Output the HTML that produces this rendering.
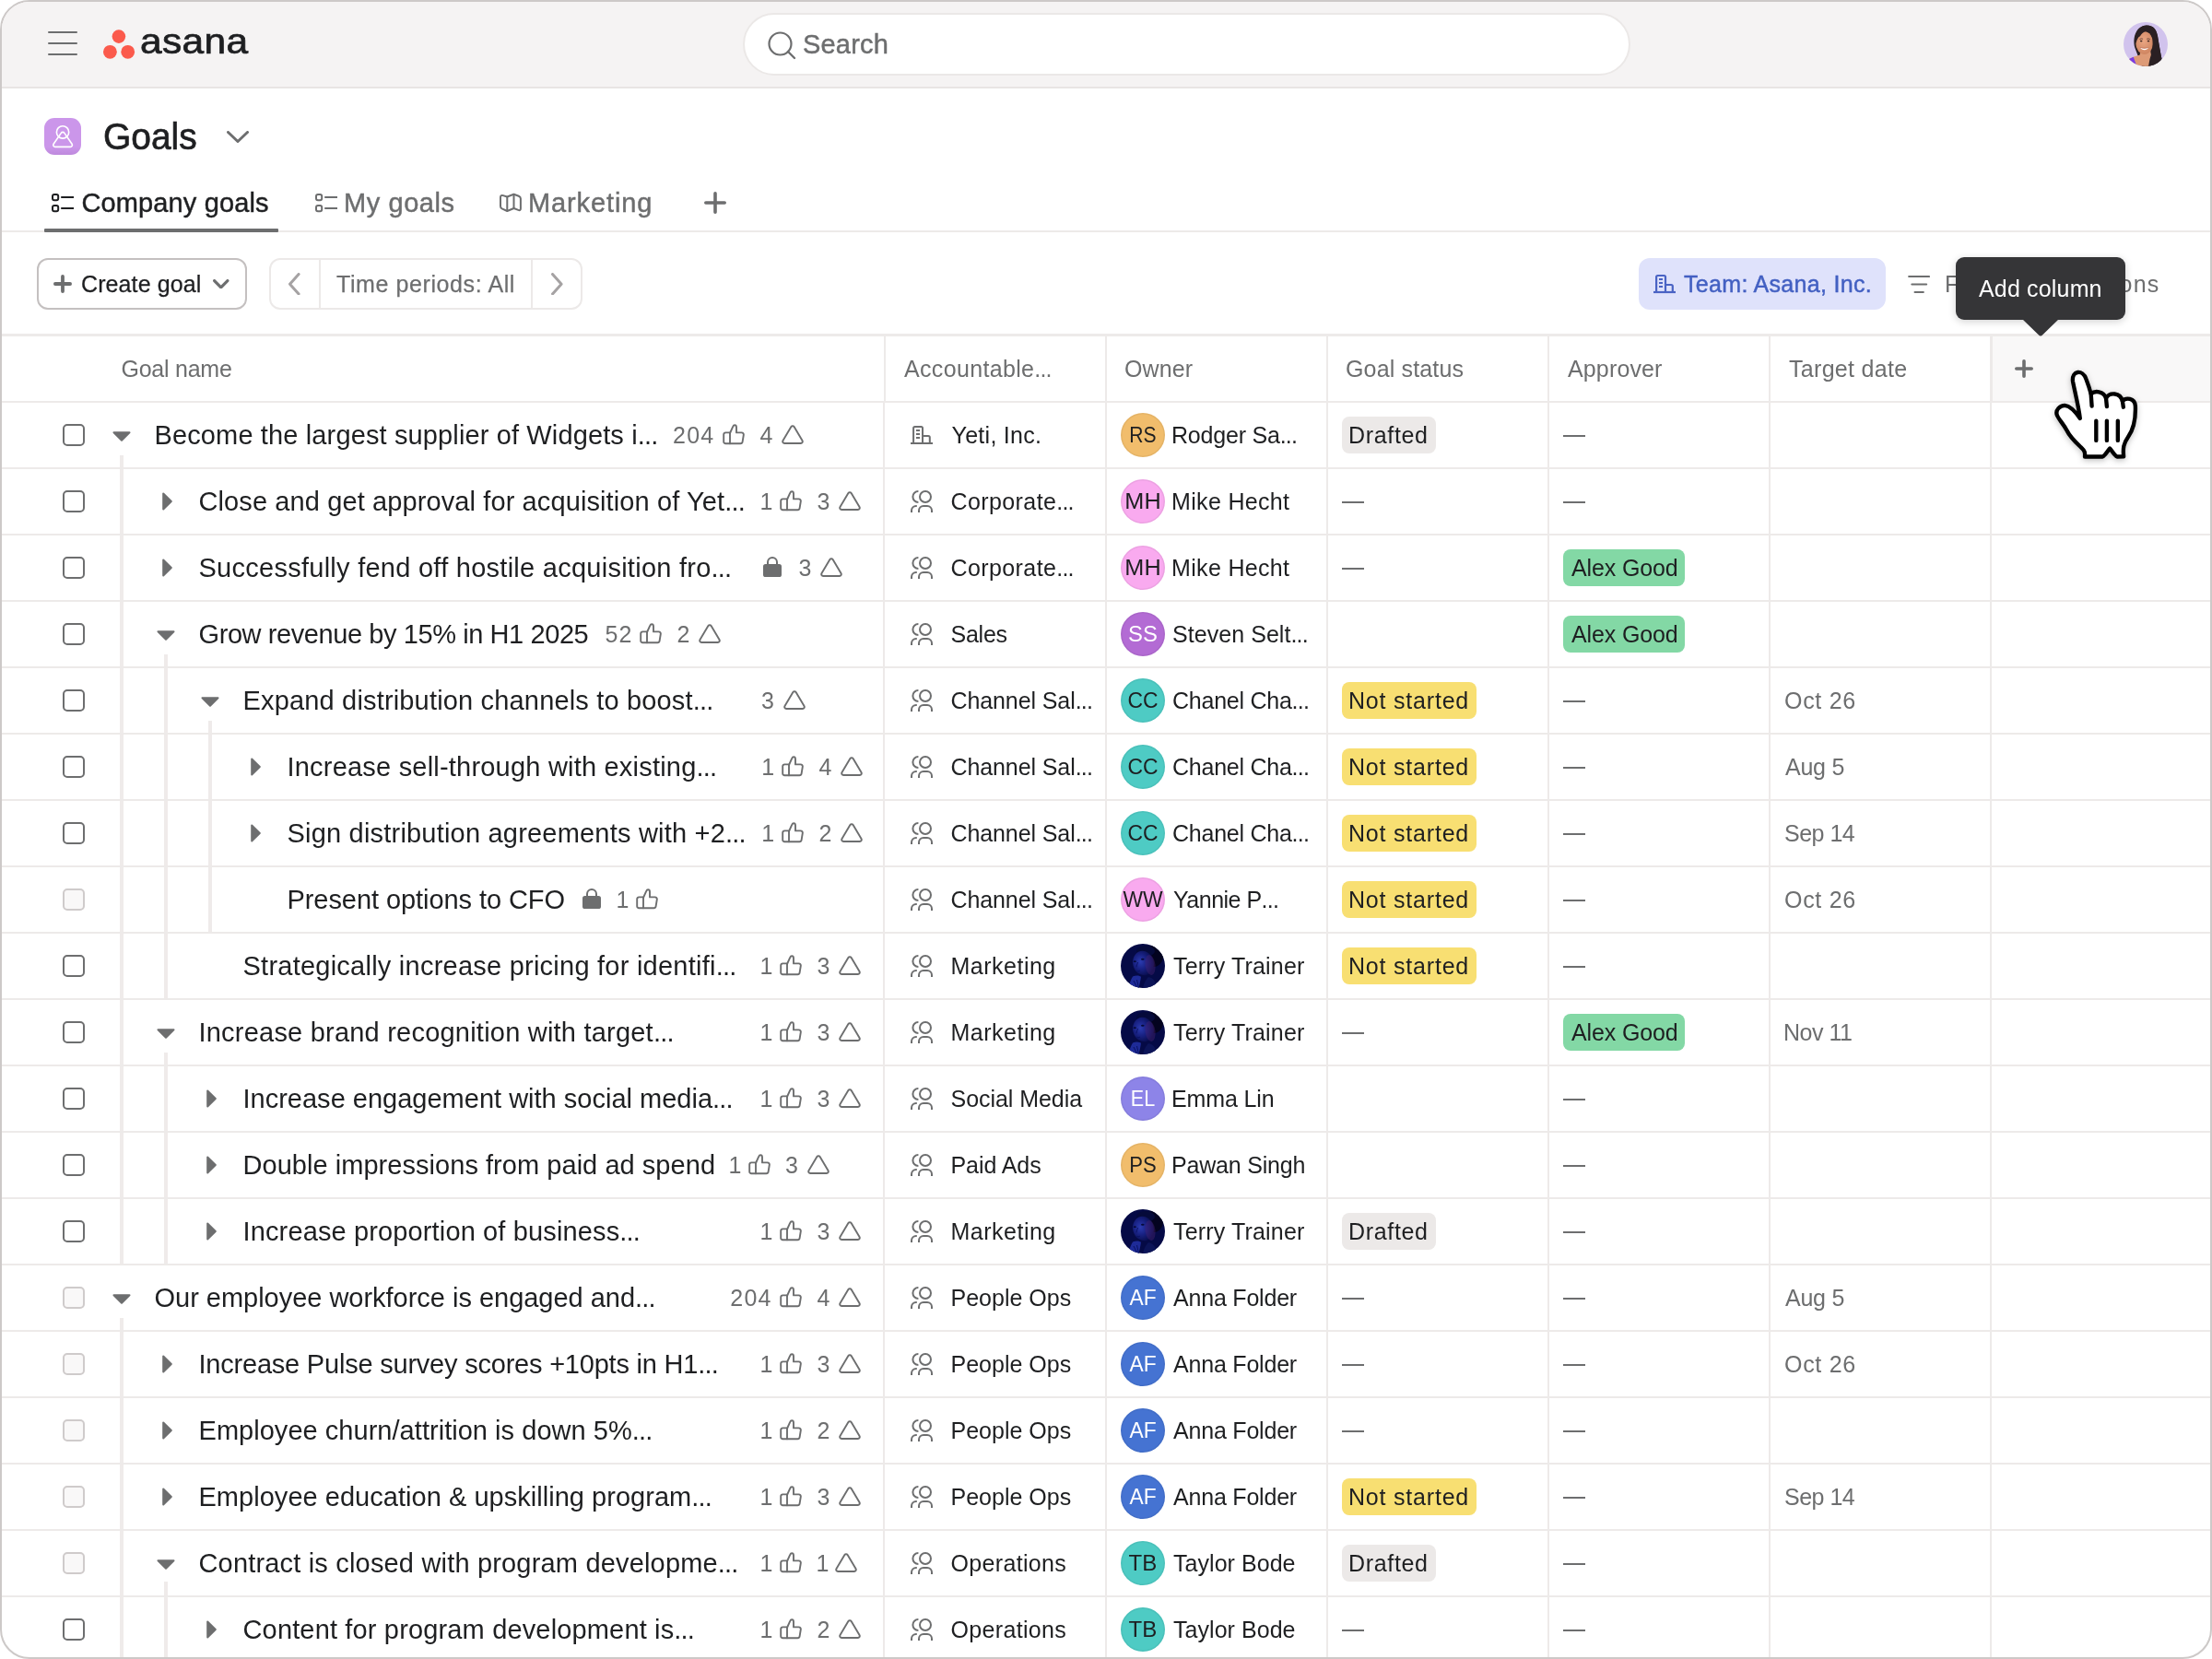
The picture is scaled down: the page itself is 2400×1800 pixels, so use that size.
<!DOCTYPE html>
<html lang="en"><head><meta charset="utf-8"><title>Goals - Asana</title><style>
html,body{margin:0;padding:0;background:#fff;}
body{width:2400px;height:1800px;overflow:hidden;position:relative;font-family:"Liberation Sans",sans-serif;}
#w{position:absolute;left:0;top:0;width:2400px;height:1800px;box-sizing:border-box;border:2px solid #cdc9c8;border-radius:32px;overflow:hidden;background:#fff;}
#c{position:absolute;left:-2px;top:-2px;width:2400px;height:1800px;will-change:transform;}
.a{position:absolute;display:block;}
.t{position:absolute;white-space:nowrap;line-height:48px;height:48px;}
.e{letter-spacing:-0.8px;}
</style></head>
<body><div id="w"><div id="c">
<div class="a" style="left:0px;top:0px;width:2400px;height:94px;background:#f5f3f3;border-bottom:2px solid #e8e5e4;"></div>
<div class="a" style="left:52px;top:33.8px;width:32px;height:2.4px;background:#6d6e6f;border-radius:1px;"></div>
<div class="a" style="left:52px;top:45.8px;width:32px;height:2.4px;background:#6d6e6f;border-radius:1px;"></div>
<div class="a" style="left:52px;top:57.8px;width:32px;height:2.4px;background:#6d6e6f;border-radius:1px;"></div>
<svg class="a" style="left:110px;top:30px;fill:#fb5a4c;" width="40" height="36" viewBox="0 0 40 36"><circle cx="18.9" cy="9.6" r="7.3"/><circle cx="9.4" cy="26.3" r="7.4"/><circle cx="28.7" cy="26.3" r="7.4"/></svg>
<span id="logo2" class="t" style="left:152.30px;top:20.8px;font-size:38px;color:#1e1f21;-webkit-text-stroke:0.7px #1e1f21;transform:scaleX(1.118);transform-origin:0 50%;letter-spacing:0.3px;">asana</span>
<div class="a" style="left:805.5px;top:14px;width:963px;height:67.5px;box-sizing:border-box;background:#fff;border:2px solid #ebe8e7;border-radius:34px;"></div>
<svg class="a" style="left:832.7px;top:33.6px;" width="32" height="32" viewBox="0 0 32 32"><circle cx="13.5" cy="13.5" r="12" fill="none" stroke="#6d6e6f" stroke-width="2.2"/><path d="M22 22l7 7" stroke="#6d6e6f" stroke-width="2.4" stroke-linecap="round"/></svg>
<span id="search" class="t" style="left:871.00px;top:24px;font-size:29px;color:#6d6e6f;letter-spacing:0.200px;-webkit-text-stroke:0.45px #6d6e6f;">Search</span>
<svg class="a" style="left:2304px;top:24px;" width="48" height="48" viewBox="0 0 48 48"><defs><clipPath id="avc"><circle cx="24" cy="24" r="24"/></clipPath><radialGradient id="skin" cx="45%" cy="40%" r="65%"><stop offset="0" stop-color="#eaa683"/><stop offset="1" stop-color="#cd835f"/></radialGradient></defs><g clip-path="url(#avc)"><rect width="48" height="48" fill="#d1c3ed"/><path d="M12.4 28C9 15 15 3.4 25 3.4c8 0 11 5.600000000000001 12 11.6c1.5 9 3 18 4.500000000000001 25L36 48H20z" fill="#2a2023"/><path d="M5 41c4-3.2 9-4.2 12.500000000000002-5.2L19 30h10l1 6c3 4 2 9-1 12H8z" fill="#dd9a76"/><path d="M5.5 40.2l5.2-2.4L14.5 48H6z" fill="#7a3ce6"/><ellipse cx="22.7" cy="22.6" rx="9.5" ry="12.3" fill="url(#skin)"/><path d="M13 24c-1.500000000000001-7 1-12.500000000000002 5-14.500000000000002c2.2-1 4.500000000000001-.8 6.500000000000001.2c-3.2 1.2-5.2 3-6.500000000000001 5.600000000000001c-2.2.8-3.600000000000001 4.5-5 8.7z" fill="#2a2023"/><path d="M24 9.4c4.300000000000001.6 7 4 7.5 10c.5 7-.5 13-3 20.6L27 48h10l4.500000000000001-8c-1.500000000000001-7-3-16-4.500000000000001-25C36 9 33 3.4 25 3.4c-2.500000000000001 0-4.500000000000001.8-6 2.2c2 .8 3.500000000000001 2 5 3.8z" fill="#2a2023"/><ellipse cx="19.2" cy="20.6" rx="1.3" ry=".8" fill="#3b2522"/><ellipse cx="27" cy="20.6" rx="1.3" ry=".8" fill="#3b2522"/><path d="M17.5 18.6q1.800000000000001-1.1 3.600000000000001-.3M25.2 18.3q1.800000000000001-.8 3.600000000000001.3" stroke="#3b2522" stroke-width=".7" fill="none"/><path d="M18.2 27.6c2.4 1.4 6.400000000000001 1.4 8.8 0c-1.200000000000001 3.6-7.4 3.6-8.8 0z" fill="#fff"/><path d="M18 27.4c2.6 1.1 6.6 1.1 9.200000000000001 0" stroke="#b5644d" stroke-width=".6" fill="none"/></g></svg>
<svg class="a" width="0" height="0" style="left:0;top:0"><defs><radialGradient id="tf" cx="38%" cy="42%" r="62%"><stop offset="0" stop-color="#2b3bb0"/><stop offset=".5" stop-color="#182182"/><stop offset="1" stop-color="#080d4c"/></radialGradient><clipPath id="tc"><circle cx="24" cy="24" r="24"/></clipPath><g id="terry" clip-path="url(#tc)"><rect width="48" height="48" fill="#050a46"/><ellipse cx="35" cy="13.5" rx="11" ry="11.5" fill="#03031f"/><ellipse cx="27" cy="8" rx="10" ry="6" fill="#050a3a"/><ellipse cx="24.5" cy="21" rx="11.3" ry="13.3" transform="rotate(-14 24.5 21)" fill="url(#tf)"/><ellipse cx="32" cy="23" rx="5.5" ry="11" transform="rotate(-8 32 23)" fill="#4a2372" opacity=".4"/><path d="M30 36c4 1 8 3 9 12H24c1-5 3-9 6-12z" fill="#0c1458"/><path d="M13 35.5c3-1.500000000000001 6.500000000000001-1.500000000000001 9 .2c-.5 4-1.500000000000001 8-2.500000000000001 12.3H8.5c1-5 2.500000000000001-9.5 4.500000000000001-12.500000000000002z" fill="#1e2b98"/><path d="M14 40l4 8M17.5 39l2 9" stroke="#0a1263" stroke-width="1"/><ellipse cx="15.3" cy="19.2" rx="1.6" ry=".9" fill="#060a38"/><ellipse cx="23.8" cy="16.8" rx="1.800000000000001" ry="1" fill="#060a38"/><path d="M18.6 20c-.8 2.500000000000001-1.800000000000001 4-1.2 5.2M16.5 29.3c1.500000000000001.6 3 .5 4.500000000000001-.1" stroke="#0a1263" stroke-width=".9" fill="none"/></g></defs></svg>
<div class="a" style="left:48px;top:128px;width:40px;height:40px;background:linear-gradient(#cb96ea 0%,#cb96ea 78%,#be89dd 100%);border-radius:11px;"></div>
<svg class="a" style="left:48px;top:128px;" width="40" height="40" viewBox="0 0 40 40"><g fill="none" stroke="#fff" stroke-width="1.65" stroke-linejoin="round"><circle cx="20.05" cy="15.4" r="6.65"/><path d="M18.3 16.4a2.1 2.1 0 0 1 3.600000000000001 0L30.1 28.2a2.1 2.1 0 0 1-1.800000000000001 3.2H11.9a2.1 2.1 0 0 1-1.800000000000001-3.2z"/></g></svg>
<span id="goals2" class="t" style="left:111.50px;top:124px;font-size:41.5px;color:#1e1f21;-webkit-text-stroke:0.7px #1e1f21;transform:scaleX(0.938);transform-origin:0 50%;letter-spacing:0px;">Goals</span>
<svg class="a" style="left:246px;top:142px;" width="24" height="13" viewBox="0 0 24 13"><path d="M1.5 1.5L12 11.5L22.5 1.5" fill="none" stroke="#6d6e6f" stroke-width="3" stroke-linecap="round" stroke-linejoin="round"/></svg>
<div class="a" style="left:0px;top:250px;width:2400px;height:2px;background:#edeae9;"></div>
<div class="a" style="left:48px;top:248px;width:254px;height:4px;background:#6d6e6f;border-radius:1px;"></div>
<svg class="a" style="left:56px;top:210px;" width="24" height="21" viewBox="0 0 24 21"><g fill="none" stroke="#1e1f21" stroke-width="2"><rect x="1" y="1" width="6.2" height="6.2" rx="2"/><rect x="1" y="13" width="6.2" height="6.2" rx="2"/><path d="M10.2 4.1H24M10.2 16.1H24"/></g></svg>
<span id="tab1" class="t" style="left:88.50px;top:196px;font-size:29px;color:#1e1f21;letter-spacing:0.125px;-webkit-text-stroke:0.45px #1e1f21;">Company goals</span>
<svg class="a" style="left:342px;top:210px;" width="24" height="21" viewBox="0 0 24 21"><g fill="none" stroke="#6d6e6f" stroke-width="2"><rect x="1" y="1" width="6.2" height="6.2" rx="2"/><rect x="1" y="13" width="6.2" height="6.2" rx="2"/><path d="M10.2 4.1H24M10.2 16.1H24"/></g></svg>
<span id="tab2" class="t" style="left:373.00px;top:196px;font-size:29px;color:#6d6e6f;letter-spacing:0.571px;-webkit-text-stroke:0.45px #6d6e6f;">My goals</span>
<svg class="a" style="left:541px;top:209px;" width="26" height="22" viewBox="0 0 26 22"><g fill="none" stroke="#6d6e6f" stroke-width="2" stroke-linejoin="round"><path d="M2 5.2Q2 2.2 4.8 3.1L9.3 4.5L16.5 1.7L21.8 3.8Q23.9 4.6 23.9 6.6V17.2Q23.9 19.8 21.4 18.9L16.5 17L9.3 20L3.6 17.4Q2 16.6 2 14.8Z"/><path d="M9.3 4.5V20M16.5 1.7V17"/></g></svg>
<span id="tab3" class="t" style="left:573.00px;top:196px;font-size:29px;color:#6d6e6f;letter-spacing:0.875px;-webkit-text-stroke:0.45px #6d6e6f;">Marketing</span>
<svg class="a" style="left:763.7px;top:208px;" width="24" height="24" viewBox="0 0 24 24"><path d="M1.8 12H22.2M12 1.8V22.2" stroke="#6d6e6f" stroke-width="3.6" stroke-linecap="round"/></svg>
<div class="a" style="left:40px;top:280px;width:228px;height:56px;box-sizing:border-box;border:2px solid #c4c0c0;border-radius:12px;background:#fff;"></div>
<svg class="a" style="left:58px;top:298px;" width="20" height="20" viewBox="0 0 20 20"><path d="M1.9 10H18.1M10 1.9V18.1" stroke="#6d6e6f" stroke-width="3.8" stroke-linecap="round"/></svg>
<span id="create" class="t" style="left:88.00px;top:284px;font-size:25px;color:#1e1f21;letter-spacing:0.100px;-webkit-text-stroke:0.25px #1e1f21;">Create goal</span>
<svg class="a" style="left:231.3px;top:303px;" width="17.5" height="10.4" viewBox="0 0 17.5 10.4"><path d="M1.6 1.6L8.75 8.8L15.9 1.6" fill="none" stroke="#6d6e6f" stroke-width="3.2" stroke-linecap="round" stroke-linejoin="round"/></svg>
<div class="a" style="left:292px;top:280px;width:340px;height:56px;box-sizing:border-box;border:2px solid #ece9e8;border-radius:12px;background:#fff;"></div>
<div class="a" style="left:346px;top:282px;width:2px;height:52px;background:#ece9e8;"></div>
<div class="a" style="left:576px;top:282px;width:2px;height:52px;background:#ece9e8;"></div>
<svg class="a" style="left:313.2px;top:295.8px;" width="12.6" height="24.4" viewBox="0 0 12.6 24.4"><path d="M11.1 1.5L1.5 12.2L11.1 22.9" fill="none" stroke="#a5a2a3" stroke-width="3" stroke-linecap="round" stroke-linejoin="round"/></svg>
<svg class="a" style="left:598.2px;top:295.8px;" width="12.6" height="24.4" viewBox="0 0 12.6 24.4"><path d="M1.5 1.5L11.1 12.2L1.5 22.9" fill="none" stroke="#a5a2a3" stroke-width="3" stroke-linecap="round" stroke-linejoin="round"/></svg>
<span id="timep" class="t" style="left:365.00px;top:284px;font-size:25px;color:#6d6e6f;letter-spacing:0.595px;-webkit-text-stroke:0.25px #6d6e6f;">Time periods: All</span>
<div class="a" style="left:1778px;top:280px;width:268px;height:56px;background:#dfe2fb;border-radius:12px;"></div>
<svg class="a" style="left:1794px;top:296px;" width="24" height="23" viewBox="0 0 24 23"><g fill="none" stroke="#4a63c4" stroke-width="2.2"><path d="M0 21H24"/><path d="M3.1 21V4.6a1.6 1.6 0 0 1 1.6-1.6h6.7a1.6 1.6 0 0 1 1.6 1.6V21"/><path d="M13 13h6.2a1.6 1.6 0 0 1 1.6 1.6V21"/><path d="M6 7h4M6 11h4M6 15h4"/></g></svg>
<span id="team" class="t" style="left:1827.00px;top:284px;font-size:25px;color:#4360c2;letter-spacing:0.312px;-webkit-text-stroke:0.45px #4360c2;">Team: Asana, Inc.</span>
<svg class="a" style="left:2070px;top:298px;" width="24" height="22" viewBox="0 0 24 22"><path d="M1.2 2H23M4.4 10.5H20.1M7.6 19H16.8" stroke="#6d6e6f" stroke-width="2.2" stroke-linecap="round"/></svg>
<span id="filter" class="t" style="left:2110.00px;top:284px;font-size:25px;color:#6d6e6f;">Filter</span>
<span id="options" class="t" style="left:0.00px;top:284px;font-size:25px;color:#6d6e6f;left:auto;right:56.5px;letter-spacing:1.2px;">Options</span>
<div class="a" style="left:0px;top:362px;width:2400px;height:3px;background:#edeae9;"></div>
<div class="a" style="left:2162px;top:365px;width:238px;height:70px;background:#f9f8f8;"></div>
<div class="a" style="left:0px;top:435px;width:2400px;height:2px;background:#edeae9;"></div>
<span id="h0" class="t" style="left:131.50px;top:376px;font-size:25px;color:#6d6e6f;letter-spacing:-0.250px;">Goal name</span>
<span id="h1" class="t" style="left:981.00px;top:376px;font-size:25px;color:#6d6e6f;letter-spacing:0.339px;">Accountable<span class="e">...</span></span>
<span id="h2" class="t" style="left:1220.00px;top:376px;font-size:25px;color:#6d6e6f;letter-spacing:0.125px;">Owner</span>
<span id="h3" class="t" style="left:1460.00px;top:376px;font-size:25px;color:#6d6e6f;letter-spacing:0.150px;">Goal status</span>
<span id="h4" class="t" style="left:1701.00px;top:376px;font-size:25px;color:#6d6e6f;letter-spacing:0.143px;">Approver</span>
<span id="h5" class="t" style="left:1941.00px;top:376px;font-size:25px;color:#6d6e6f;letter-spacing:0.300px;">Target date</span>
<svg class="a" style="left:2186px;top:390px;" width="20" height="20" viewBox="0 0 20 20"><path d="M1.8 10H18.2M10 1.8V18.2" stroke="#6d6e6f" stroke-width="3.6" stroke-linecap="round"/></svg>
<div class="a" style="left:959px;top:365px;width:2px;height:70px;background:#edeae9;"></div>
<div class="a" style="left:1199px;top:365px;width:2px;height:70px;background:#edeae9;"></div>
<div class="a" style="left:1439px;top:365px;width:2px;height:70px;background:#edeae9;"></div>
<div class="a" style="left:1679px;top:365px;width:2px;height:70px;background:#edeae9;"></div>
<div class="a" style="left:1919px;top:365px;width:2px;height:70px;background:#edeae9;"></div>
<div class="a" style="left:2159px;top:365px;width:3px;height:70px;background:#edeae9;"></div>
<div class="a" style="left:130px;top:494px;width:4px;height:878px;background:#efebea;"></div>
<div class="a" style="left:130px;top:1430px;width:4px;height:370px;background:#efebea;"></div>
<div class="a" style="left:178px;top:710px;width:4px;height:374px;background:#efebea;"></div>
<div class="a" style="left:178px;top:1142px;width:4px;height:230px;background:#efebea;"></div>
<div class="a" style="left:178px;top:1716px;width:4px;height:84px;background:#efebea;"></div>
<div class="a" style="left:226px;top:782px;width:4px;height:230px;background:#efebea;"></div>
<div class="a" style="left:0px;top:507px;width:2400px;height:2px;background:#edeae9;"></div>
<div class="a" style="left:68px;top:460px;width:24px;height:24px;box-sizing:border-box;border:2px solid #6d6e6f;border-radius:5px;background:#fff;"></div>
<svg class="a" style="left:122px;top:467.8px;" width="20" height="11" viewBox="0 0 20 11"><path d="M1.5 1.2H18.5L10 9.8z" fill="#6d6e6f" stroke="#6d6e6f" stroke-width="2" stroke-linejoin="round"/></svg>
<span id="n0" class="t" style="left:167.50px;top:448px;font-size:29px;color:#1e1f21;letter-spacing:0.131px;">Become the largest supplier of Widgets i<span class="e">...</span></span>
<span id="c0_0" class="t" style="left:730.10px;top:448px;font-size:25px;color:#6d6e6f;letter-spacing:1.200px;">204</span>
<svg class="a" style="left:783.8px;top:459.6px;" width="24" height="23" viewBox="0 0 24 23"><g fill="none" stroke="#6d6e6f" stroke-width="1.9" stroke-linejoin="round" stroke-linecap="round"><path d="M8 21.2H3.2a2 2 0 0 1-2-2V11.4a2 2 0 0 1 2-2H8z" /><path d="M8 10L11.2 2.9c.4-1 1-1.7 1.9-1.7c1.3 0 1.9 1 1.9 2.4V9.4h5.600000000000001a2.2 2.2 0 0 1 2.2 2.6l-1.2 7.3a2.3 2.3 0 0 1-2.3 1.9H8" /></g></svg>
<span id="c0_2" class="t" style="left:824.50px;top:448px;font-size:25px;color:#6d6e6f;">4</span>
<svg class="a" style="left:848px;top:460.1px;" width="24" height="22" viewBox="0 0 24 22"><g fill="none" stroke="#6d6e6f" stroke-width="1.9" stroke-linejoin="round"><path d="M10.4 3.1a1.9 1.9 0 0 1 3.2 0L22.5 18.1a1.9 1.9 0 0 1-1.6 2.9H3.1a1.9 1.9 0 0 1-1.6-2.9z"/></g></svg>
<svg class="a" style="left:988px;top:460px;" width="24" height="23" viewBox="0 0 24 23"><g fill="none" stroke="#6d6e6f" stroke-width="2"><path d="M0 21H24"/><path d="M3.1 21V4.6a1.6 1.6 0 0 1 1.6-1.6h6.7a1.6 1.6 0 0 1 1.6 1.6V21"/><path d="M13 13h6.2a1.6 1.6 0 0 1 1.6 1.6V21"/><path d="M6 7h4M6 11h4M6 15h4"/></g></svg>
<span id="a0" class="t" style="left:1032.50px;top:448px;font-size:25px;color:#1e1f21;letter-spacing:0.278px;">Yeti, Inc.</span>
<div class="a" style="left:1216px;top:448px;width:48px;height:48px;background:#f1bd6c;border-radius:50%;box-shadow:inset 0 0 0 1.5px rgba(0,0,0,.05);"></div>
<span id="j0" class="t" style="left:1216.00px;top:448.2px;font-size:23.7px;color:#1e1f21;width:48px;text-align:center;transform:scaleX(0.891);">RS</span>
<span id="o0" class="t" style="left:1271.00px;top:448px;font-size:25px;color:#1e1f21;letter-spacing:-0.204px;">Rodger Sa<span class="e">...</span></span>
<div class="a" style="left:1456px;top:452px;width:102px;height:40px;background:#ece9e8;border-radius:8px;"></div>
<span id="s0" class="t" style="left:1463.00px;top:448px;font-size:25px;color:#1e1f21;letter-spacing:0.667px;">Drafted</span>
<div class="a" style="left:1696px;top:471.6px;width:24px;height:2.1px;background:#6d6e6f;"></div>
<div class="a" style="left:0px;top:579px;width:2400px;height:2px;background:#edeae9;"></div>
<div class="a" style="left:68px;top:532px;width:24px;height:24px;box-sizing:border-box;border:2px solid #6d6e6f;border-radius:5px;background:#fff;"></div>
<svg class="a" style="left:176px;top:534px;" width="11" height="20" viewBox="0 0 11 20"><path d="M1.2 1.5V18.5L9.8 10z" fill="#6d6e6f" stroke="#6d6e6f" stroke-width="2" stroke-linejoin="round"/></svg>
<span id="n1" class="t" style="left:215.50px;top:520px;font-size:29px;color:#1e1f21;letter-spacing:0.106px;">Close and get approval for acquisition of Yet<span class="e">...</span></span>
<span id="c1_0" class="t" style="left:824.50px;top:520px;font-size:25px;color:#6d6e6f;">1</span>
<svg class="a" style="left:845.7px;top:531.6px;" width="24" height="23" viewBox="0 0 24 23"><g fill="none" stroke="#6d6e6f" stroke-width="1.9" stroke-linejoin="round" stroke-linecap="round"><path d="M8 21.2H3.2a2 2 0 0 1-2-2V11.4a2 2 0 0 1 2-2H8z" /><path d="M8 10L11.2 2.9c.4-1 1-1.7 1.9-1.7c1.3 0 1.9 1 1.9 2.4V9.4h5.600000000000001a2.2 2.2 0 0 1 2.2 2.6l-1.2 7.3a2.3 2.3 0 0 1-2.3 1.9H8" /></g></svg>
<span id="c1_2" class="t" style="left:886.50px;top:520px;font-size:25px;color:#6d6e6f;">3</span>
<svg class="a" style="left:909.8px;top:532.1px;" width="24" height="22" viewBox="0 0 24 22"><g fill="none" stroke="#6d6e6f" stroke-width="1.9" stroke-linejoin="round"><path d="M10.4 3.1a1.9 1.9 0 0 1 3.2 0L22.5 18.1a1.9 1.9 0 0 1-1.6 2.9H3.1a1.9 1.9 0 0 1-1.6-2.9z"/></g></svg>
<svg class="a" style="left:988px;top:532px;" width="24" height="24" viewBox="0 0 24 24"><g fill="none" stroke="#6d6e6f" stroke-width="2"><circle cx="16" cy="7" r="6"/><path d="M8.4 1A6 6 0 0 0 8.4 13"/><path d="M9 24v-2a5 5 0 0 1 5-5h4a5 5 0 0 1 5 5v2"/><path d="M1 24v-2a5 5 0 0 1 5-5h.8"/></g></svg>
<span id="a1" class="t" style="left:1031.50px;top:520px;font-size:25px;color:#1e1f21;letter-spacing:0.406px;">Corporate<span class="e">...</span></span>
<div class="a" style="left:1216px;top:520px;width:48px;height:48px;background:#f9aaef;border-radius:50%;box-shadow:inset 0 0 0 1.5px rgba(0,0,0,.05);"></div>
<span id="j1" class="t" style="left:1216.00px;top:520.2px;font-size:23.7px;color:#1e1f21;width:48px;text-align:center;transform:scaleX(1.066);">MH</span>
<span id="o1" class="t" style="left:1271.00px;top:520px;font-size:25px;color:#1e1f21;letter-spacing:0.333px;">Mike Hecht</span>
<div class="a" style="left:1456px;top:543.6px;width:24px;height:2.1px;background:#6d6e6f;"></div>
<div class="a" style="left:1696px;top:543.6px;width:24px;height:2.1px;background:#6d6e6f;"></div>
<div class="a" style="left:0px;top:651px;width:2400px;height:2px;background:#edeae9;"></div>
<div class="a" style="left:68px;top:604px;width:24px;height:24px;box-sizing:border-box;border:2px solid #6d6e6f;border-radius:5px;background:#fff;"></div>
<svg class="a" style="left:176px;top:606px;" width="11" height="20" viewBox="0 0 11 20"><path d="M1.2 1.5V18.5L9.8 10z" fill="#6d6e6f" stroke="#6d6e6f" stroke-width="2" stroke-linejoin="round"/></svg>
<span id="n2" class="t" style="left:215.50px;top:592px;font-size:29px;color:#1e1f21;letter-spacing:0.262px;">Successfully fend off hostile acquisition fro<span class="e">...</span></span>
<svg class="a" style="left:828px;top:604px;" width="20" height="22" viewBox="0 0 20 22"><rect x="0" y="8" width="20" height="14" rx="2.6" fill="#6d6e6f"/><path d="M5 9V6a5 5 0 0 1 10 0V9" fill="none" stroke="#6d6e6f" stroke-width="2"/></svg>
<span id="c2_1" class="t" style="left:866.50px;top:592px;font-size:25px;color:#6d6e6f;">3</span>
<svg class="a" style="left:889.7px;top:604.1px;" width="24" height="22" viewBox="0 0 24 22"><g fill="none" stroke="#6d6e6f" stroke-width="1.9" stroke-linejoin="round"><path d="M10.4 3.1a1.9 1.9 0 0 1 3.2 0L22.5 18.1a1.9 1.9 0 0 1-1.6 2.9H3.1a1.9 1.9 0 0 1-1.6-2.9z"/></g></svg>
<svg class="a" style="left:988px;top:604px;" width="24" height="24" viewBox="0 0 24 24"><g fill="none" stroke="#6d6e6f" stroke-width="2"><circle cx="16" cy="7" r="6"/><path d="M8.4 1A6 6 0 0 0 8.4 13"/><path d="M9 24v-2a5 5 0 0 1 5-5h4a5 5 0 0 1 5 5v2"/><path d="M1 24v-2a5 5 0 0 1 5-5h.8"/></g></svg>
<span id="a2" class="t" style="left:1031.50px;top:592px;font-size:25px;color:#1e1f21;letter-spacing:0.406px;">Corporate<span class="e">...</span></span>
<div class="a" style="left:1216px;top:592px;width:48px;height:48px;background:#f9aaef;border-radius:50%;box-shadow:inset 0 0 0 1.5px rgba(0,0,0,.05);"></div>
<span id="j2" class="t" style="left:1216.00px;top:592.2px;font-size:23.7px;color:#1e1f21;width:48px;text-align:center;transform:scaleX(1.066);">MH</span>
<span id="o2" class="t" style="left:1271.00px;top:592px;font-size:25px;color:#1e1f21;letter-spacing:0.333px;">Mike Hecht</span>
<div class="a" style="left:1456px;top:615.6px;width:24px;height:2.1px;background:#6d6e6f;"></div>
<div class="a" style="left:1696px;top:596px;width:132px;height:40px;background:#83d8a5;border-radius:8px;"></div>
<span id="p2" class="t" style="left:1705.00px;top:592px;font-size:25px;color:#1e1f21;letter-spacing:-0.125px;">Alex Good</span>
<div class="a" style="left:0px;top:723px;width:2400px;height:2px;background:#edeae9;"></div>
<div class="a" style="left:68px;top:676px;width:24px;height:24px;box-sizing:border-box;border:2px solid #6d6e6f;border-radius:5px;background:#fff;"></div>
<svg class="a" style="left:170px;top:683.8px;" width="20" height="11" viewBox="0 0 20 11"><path d="M1.5 1.2H18.5L10 9.8z" fill="#6d6e6f" stroke="#6d6e6f" stroke-width="2" stroke-linejoin="round"/></svg>
<span id="n3" class="t" style="left:215.50px;top:664px;font-size:29px;color:#1e1f21;letter-spacing:-0.414px;">Grow revenue by 15% in H1 2025</span>
<span id="c3_0" class="t" style="left:656.50px;top:664px;font-size:25px;color:#6d6e6f;letter-spacing:1.000px;">52</span>
<svg class="a" style="left:693.8px;top:675.6px;" width="24" height="23" viewBox="0 0 24 23"><g fill="none" stroke="#6d6e6f" stroke-width="1.9" stroke-linejoin="round" stroke-linecap="round"><path d="M8 21.2H3.2a2 2 0 0 1-2-2V11.4a2 2 0 0 1 2-2H8z" /><path d="M8 10L11.2 2.9c.4-1 1-1.7 1.9-1.7c1.3 0 1.9 1 1.9 2.4V9.4h5.600000000000001a2.2 2.2 0 0 1 2.2 2.6l-1.2 7.3a2.3 2.3 0 0 1-2.3 1.9H8" /></g></svg>
<span id="c3_2" class="t" style="left:734.50px;top:664px;font-size:25px;color:#6d6e6f;">2</span>
<svg class="a" style="left:757.8px;top:676.1px;" width="24" height="22" viewBox="0 0 24 22"><g fill="none" stroke="#6d6e6f" stroke-width="1.9" stroke-linejoin="round"><path d="M10.4 3.1a1.9 1.9 0 0 1 3.2 0L22.5 18.1a1.9 1.9 0 0 1-1.6 2.9H3.1a1.9 1.9 0 0 1-1.6-2.9z"/></g></svg>
<svg class="a" style="left:988px;top:676px;" width="24" height="24" viewBox="0 0 24 24"><g fill="none" stroke="#6d6e6f" stroke-width="2"><circle cx="16" cy="7" r="6"/><path d="M8.4 1A6 6 0 0 0 8.4 13"/><path d="M9 24v-2a5 5 0 0 1 5-5h4a5 5 0 0 1 5 5v2"/><path d="M1 24v-2a5 5 0 0 1 5-5h.8"/></g></svg>
<span id="a3" class="t" style="left:1031.50px;top:664px;font-size:25px;color:#1e1f21;letter-spacing:-0.250px;">Sales</span>
<div class="a" style="left:1216px;top:664px;width:48px;height:48px;background:#b36bd4;border-radius:50%;box-shadow:inset 0 0 0 1.5px rgba(0,0,0,.05);"></div>
<span id="j3" class="t" style="left:1216.00px;top:664.2px;font-size:23.7px;color:#fff;width:48px;text-align:center;transform:scaleX(1.007);">SS</span>
<span id="o3" class="t" style="left:1272.00px;top:664px;font-size:25px;color:#1e1f21;letter-spacing:0.054px;">Steven Selt<span class="e">...</span></span>
<div class="a" style="left:1696px;top:668px;width:132px;height:40px;background:#83d8a5;border-radius:8px;"></div>
<span id="p3" class="t" style="left:1705.00px;top:664px;font-size:25px;color:#1e1f21;letter-spacing:-0.125px;">Alex Good</span>
<div class="a" style="left:0px;top:795px;width:2400px;height:2px;background:#edeae9;"></div>
<div class="a" style="left:68px;top:748px;width:24px;height:24px;box-sizing:border-box;border:2px solid #6d6e6f;border-radius:5px;background:#fff;"></div>
<svg class="a" style="left:218px;top:755.8px;" width="20" height="11" viewBox="0 0 20 11"><path d="M1.5 1.2H18.5L10 9.8z" fill="#6d6e6f" stroke="#6d6e6f" stroke-width="2" stroke-linejoin="round"/></svg>
<span id="n4" class="t" style="left:263.50px;top:736px;font-size:29px;color:#1e1f21;letter-spacing:0.168px;">Expand distribution channels to boost<span class="e">...</span></span>
<span id="c4_0" class="t" style="left:826.10px;top:736px;font-size:25px;color:#6d6e6f;">3</span>
<svg class="a" style="left:850.2px;top:748.1px;" width="24" height="22" viewBox="0 0 24 22"><g fill="none" stroke="#6d6e6f" stroke-width="1.9" stroke-linejoin="round"><path d="M10.4 3.1a1.9 1.9 0 0 1 3.2 0L22.5 18.1a1.9 1.9 0 0 1-1.6 2.9H3.1a1.9 1.9 0 0 1-1.6-2.9z"/></g></svg>
<svg class="a" style="left:988px;top:748px;" width="24" height="24" viewBox="0 0 24 24"><g fill="none" stroke="#6d6e6f" stroke-width="2"><circle cx="16" cy="7" r="6"/><path d="M8.4 1A6 6 0 0 0 8.4 13"/><path d="M9 24v-2a5 5 0 0 1 5-5h4a5 5 0 0 1 5 5v2"/><path d="M1 24v-2a5 5 0 0 1 5-5h.8"/></g></svg>
<span id="a4" class="t" style="left:1031.50px;top:736px;font-size:25px;color:#1e1f21;letter-spacing:-0.098px;">Channel Sal<span class="e">...</span></span>
<div class="a" style="left:1216px;top:736px;width:48px;height:48px;background:#4ecbc4;border-radius:50%;box-shadow:inset 0 0 0 1.5px rgba(0,0,0,.05);"></div>
<span id="j4" class="t" style="left:1216.00px;top:736.2px;font-size:23.7px;color:#1e1f21;width:48px;text-align:center;transform:scaleX(0.967);">CC</span>
<span id="o4" class="t" style="left:1272.00px;top:736px;font-size:25px;color:#1e1f21;letter-spacing:-0.243px;">Chanel Cha<span class="e">...</span></span>
<div class="a" style="left:1456px;top:740px;width:146px;height:40px;background:#f8df72;border-radius:8px;"></div>
<span id="s4" class="t" style="left:1463.00px;top:736px;font-size:25px;color:#1e1f21;letter-spacing:0.800px;">Not started</span>
<div class="a" style="left:1696px;top:759.6px;width:24px;height:2.1px;background:#6d6e6f;"></div>
<span id="d4" class="t" style="left:1936.00px;top:736px;font-size:25px;color:#6d6e6f;letter-spacing:0.700px;">Oct 26</span>
<div class="a" style="left:0px;top:867px;width:2400px;height:2px;background:#edeae9;"></div>
<div class="a" style="left:68px;top:820px;width:24px;height:24px;box-sizing:border-box;border:2px solid #6d6e6f;border-radius:5px;background:#fff;"></div>
<svg class="a" style="left:272px;top:822px;" width="11" height="20" viewBox="0 0 11 20"><path d="M1.2 1.5V18.5L9.8 10z" fill="#6d6e6f" stroke="#6d6e6f" stroke-width="2" stroke-linejoin="round"/></svg>
<span id="n5" class="t" style="left:311.50px;top:808px;font-size:29px;color:#1e1f21;letter-spacing:0.205px;">Increase sell-through with existing<span class="e">...</span></span>
<span id="c5_0" class="t" style="left:826.30px;top:808px;font-size:25px;color:#6d6e6f;">1</span>
<svg class="a" style="left:848px;top:819.6px;" width="24" height="23" viewBox="0 0 24 23"><g fill="none" stroke="#6d6e6f" stroke-width="1.9" stroke-linejoin="round" stroke-linecap="round"><path d="M8 21.2H3.2a2 2 0 0 1-2-2V11.4a2 2 0 0 1 2-2H8z" /><path d="M8 10L11.2 2.9c.4-1 1-1.7 1.9-1.7c1.3 0 1.9 1 1.9 2.4V9.4h5.600000000000001a2.2 2.2 0 0 1 2.2 2.6l-1.2 7.3a2.3 2.3 0 0 1-2.3 1.9H8" /></g></svg>
<span id="c5_2" class="t" style="left:888.50px;top:808px;font-size:25px;color:#6d6e6f;">4</span>
<svg class="a" style="left:912px;top:820.1px;" width="24" height="22" viewBox="0 0 24 22"><g fill="none" stroke="#6d6e6f" stroke-width="1.9" stroke-linejoin="round"><path d="M10.4 3.1a1.9 1.9 0 0 1 3.2 0L22.5 18.1a1.9 1.9 0 0 1-1.6 2.9H3.1a1.9 1.9 0 0 1-1.6-2.9z"/></g></svg>
<svg class="a" style="left:988px;top:820px;" width="24" height="24" viewBox="0 0 24 24"><g fill="none" stroke="#6d6e6f" stroke-width="2"><circle cx="16" cy="7" r="6"/><path d="M8.4 1A6 6 0 0 0 8.4 13"/><path d="M9 24v-2a5 5 0 0 1 5-5h4a5 5 0 0 1 5 5v2"/><path d="M1 24v-2a5 5 0 0 1 5-5h.8"/></g></svg>
<span id="a5" class="t" style="left:1031.50px;top:808px;font-size:25px;color:#1e1f21;letter-spacing:-0.098px;">Channel Sal<span class="e">...</span></span>
<div class="a" style="left:1216px;top:808px;width:48px;height:48px;background:#4ecbc4;border-radius:50%;box-shadow:inset 0 0 0 1.5px rgba(0,0,0,.05);"></div>
<span id="j5" class="t" style="left:1216.00px;top:808.2px;font-size:23.7px;color:#1e1f21;width:48px;text-align:center;transform:scaleX(0.967);">CC</span>
<span id="o5" class="t" style="left:1272.00px;top:808px;font-size:25px;color:#1e1f21;letter-spacing:-0.243px;">Chanel Cha<span class="e">...</span></span>
<div class="a" style="left:1456px;top:812px;width:146px;height:40px;background:#f8df72;border-radius:8px;"></div>
<span id="s5" class="t" style="left:1463.00px;top:808px;font-size:25px;color:#1e1f21;letter-spacing:0.800px;">Not started</span>
<div class="a" style="left:1696px;top:831.6px;width:24px;height:2.1px;background:#6d6e6f;"></div>
<span id="d5" class="t" style="left:1937.00px;top:808px;font-size:25px;color:#6d6e6f;letter-spacing:-0.250px;">Aug 5</span>
<div class="a" style="left:0px;top:939px;width:2400px;height:2px;background:#edeae9;"></div>
<div class="a" style="left:68px;top:892px;width:24px;height:24px;box-sizing:border-box;border:2px solid #6d6e6f;border-radius:5px;background:#fff;"></div>
<svg class="a" style="left:272px;top:894px;" width="11" height="20" viewBox="0 0 11 20"><path d="M1.2 1.5V18.5L9.8 10z" fill="#6d6e6f" stroke="#6d6e6f" stroke-width="2" stroke-linejoin="round"/></svg>
<span id="n6" class="t" style="left:311.50px;top:880px;font-size:29px;color:#1e1f21;letter-spacing:0.200px;">Sign distribution agreements with +2<span class="e">...</span></span>
<span id="c6_0" class="t" style="left:826.30px;top:880px;font-size:25px;color:#6d6e6f;">1</span>
<svg class="a" style="left:848px;top:891.6px;" width="24" height="23" viewBox="0 0 24 23"><g fill="none" stroke="#6d6e6f" stroke-width="1.9" stroke-linejoin="round" stroke-linecap="round"><path d="M8 21.2H3.2a2 2 0 0 1-2-2V11.4a2 2 0 0 1 2-2H8z" /><path d="M8 10L11.2 2.9c.4-1 1-1.7 1.9-1.7c1.3 0 1.9 1 1.9 2.4V9.4h5.600000000000001a2.2 2.2 0 0 1 2.2 2.6l-1.2 7.3a2.3 2.3 0 0 1-2.3 1.9H8" /></g></svg>
<span id="c6_2" class="t" style="left:888.50px;top:880px;font-size:25px;color:#6d6e6f;">2</span>
<svg class="a" style="left:912px;top:892.1px;" width="24" height="22" viewBox="0 0 24 22"><g fill="none" stroke="#6d6e6f" stroke-width="1.9" stroke-linejoin="round"><path d="M10.4 3.1a1.9 1.9 0 0 1 3.2 0L22.5 18.1a1.9 1.9 0 0 1-1.6 2.9H3.1a1.9 1.9 0 0 1-1.6-2.9z"/></g></svg>
<svg class="a" style="left:988px;top:892px;" width="24" height="24" viewBox="0 0 24 24"><g fill="none" stroke="#6d6e6f" stroke-width="2"><circle cx="16" cy="7" r="6"/><path d="M8.4 1A6 6 0 0 0 8.4 13"/><path d="M9 24v-2a5 5 0 0 1 5-5h4a5 5 0 0 1 5 5v2"/><path d="M1 24v-2a5 5 0 0 1 5-5h.8"/></g></svg>
<span id="a6" class="t" style="left:1031.50px;top:880px;font-size:25px;color:#1e1f21;letter-spacing:-0.098px;">Channel Sal<span class="e">...</span></span>
<div class="a" style="left:1216px;top:880px;width:48px;height:48px;background:#4ecbc4;border-radius:50%;box-shadow:inset 0 0 0 1.5px rgba(0,0,0,.05);"></div>
<span id="j6" class="t" style="left:1216.00px;top:880.2px;font-size:23.7px;color:#1e1f21;width:48px;text-align:center;transform:scaleX(0.967);">CC</span>
<span id="o6" class="t" style="left:1272.00px;top:880px;font-size:25px;color:#1e1f21;letter-spacing:-0.243px;">Chanel Cha<span class="e">...</span></span>
<div class="a" style="left:1456px;top:884px;width:146px;height:40px;background:#f8df72;border-radius:8px;"></div>
<span id="s6" class="t" style="left:1463.00px;top:880px;font-size:25px;color:#1e1f21;letter-spacing:0.800px;">Not started</span>
<div class="a" style="left:1696px;top:903.6px;width:24px;height:2.1px;background:#6d6e6f;"></div>
<span id="d6" class="t" style="left:1936.00px;top:880px;font-size:25px;color:#6d6e6f;letter-spacing:-0.500px;">Sep 14</span>
<div class="a" style="left:0px;top:1011px;width:2400px;height:2px;background:#edeae9;"></div>
<div class="a" style="left:68px;top:964px;width:24px;height:24px;box-sizing:border-box;border:2px solid #cfcbcb;border-radius:5px;background:#f9f8f8;"></div>
<span id="n7" class="t" style="left:311.50px;top:952px;font-size:29px;color:#1e1f21;letter-spacing:-0.072px;">Present options to CFO</span>
<svg class="a" style="left:632px;top:964px;" width="20" height="22" viewBox="0 0 20 22"><rect x="0" y="8" width="20" height="14" rx="2.6" fill="#6d6e6f"/><path d="M5 9V6a5 5 0 0 1 10 0V9" fill="none" stroke="#6d6e6f" stroke-width="2"/></svg>
<span id="c7_1" class="t" style="left:668.50px;top:952px;font-size:25px;color:#6d6e6f;">1</span>
<svg class="a" style="left:689.8px;top:963.6px;" width="24" height="23" viewBox="0 0 24 23"><g fill="none" stroke="#6d6e6f" stroke-width="1.9" stroke-linejoin="round" stroke-linecap="round"><path d="M8 21.2H3.2a2 2 0 0 1-2-2V11.4a2 2 0 0 1 2-2H8z" /><path d="M8 10L11.2 2.9c.4-1 1-1.7 1.9-1.7c1.3 0 1.9 1 1.9 2.4V9.4h5.600000000000001a2.2 2.2 0 0 1 2.2 2.6l-1.2 7.3a2.3 2.3 0 0 1-2.3 1.9H8" /></g></svg>
<svg class="a" style="left:988px;top:964px;" width="24" height="24" viewBox="0 0 24 24"><g fill="none" stroke="#6d6e6f" stroke-width="2"><circle cx="16" cy="7" r="6"/><path d="M8.4 1A6 6 0 0 0 8.4 13"/><path d="M9 24v-2a5 5 0 0 1 5-5h4a5 5 0 0 1 5 5v2"/><path d="M1 24v-2a5 5 0 0 1 5-5h.8"/></g></svg>
<span id="a7" class="t" style="left:1031.50px;top:952px;font-size:25px;color:#1e1f21;letter-spacing:-0.098px;">Channel Sal<span class="e">...</span></span>
<div class="a" style="left:1216px;top:952px;width:48px;height:48px;background:#f9aaef;border-radius:50%;box-shadow:inset 0 0 0 1.5px rgba(0,0,0,.05);"></div>
<span id="j7" class="t" style="left:1216.00px;top:952.2px;font-size:23.7px;color:#1e1f21;width:48px;text-align:center;transform:scaleX(0.963);">WW</span>
<span id="o7" class="t" style="left:1273.00px;top:952px;font-size:25px;color:#1e1f21;letter-spacing:-0.500px;">Yannie P<span class="e">...</span></span>
<div class="a" style="left:1456px;top:956px;width:146px;height:40px;background:#f8df72;border-radius:8px;"></div>
<span id="s7" class="t" style="left:1463.00px;top:952px;font-size:25px;color:#1e1f21;letter-spacing:0.800px;">Not started</span>
<div class="a" style="left:1696px;top:975.6px;width:24px;height:2.1px;background:#6d6e6f;"></div>
<span id="d7" class="t" style="left:1936.00px;top:952px;font-size:25px;color:#6d6e6f;letter-spacing:0.700px;">Oct 26</span>
<div class="a" style="left:0px;top:1083px;width:2400px;height:2px;background:#edeae9;"></div>
<div class="a" style="left:68px;top:1036px;width:24px;height:24px;box-sizing:border-box;border:2px solid #6d6e6f;border-radius:5px;background:#fff;"></div>
<span id="n8" class="t" style="left:263.50px;top:1024px;font-size:29px;color:#1e1f21;letter-spacing:0.238px;">Strategically increase pricing for identifi<span class="e">...</span></span>
<span id="c8_0" class="t" style="left:824.50px;top:1024px;font-size:25px;color:#6d6e6f;">1</span>
<svg class="a" style="left:845.7px;top:1035.6px;" width="24" height="23" viewBox="0 0 24 23"><g fill="none" stroke="#6d6e6f" stroke-width="1.9" stroke-linejoin="round" stroke-linecap="round"><path d="M8 21.2H3.2a2 2 0 0 1-2-2V11.4a2 2 0 0 1 2-2H8z" /><path d="M8 10L11.2 2.9c.4-1 1-1.7 1.9-1.7c1.3 0 1.9 1 1.9 2.4V9.4h5.600000000000001a2.2 2.2 0 0 1 2.2 2.6l-1.2 7.3a2.3 2.3 0 0 1-2.3 1.9H8" /></g></svg>
<span id="c8_2" class="t" style="left:886.50px;top:1024px;font-size:25px;color:#6d6e6f;">3</span>
<svg class="a" style="left:909.8px;top:1036.1px;" width="24" height="22" viewBox="0 0 24 22"><g fill="none" stroke="#6d6e6f" stroke-width="1.9" stroke-linejoin="round"><path d="M10.4 3.1a1.9 1.9 0 0 1 3.2 0L22.5 18.1a1.9 1.9 0 0 1-1.6 2.9H3.1a1.9 1.9 0 0 1-1.6-2.9z"/></g></svg>
<svg class="a" style="left:988px;top:1036px;" width="24" height="24" viewBox="0 0 24 24"><g fill="none" stroke="#6d6e6f" stroke-width="2"><circle cx="16" cy="7" r="6"/><path d="M8.4 1A6 6 0 0 0 8.4 13"/><path d="M9 24v-2a5 5 0 0 1 5-5h4a5 5 0 0 1 5 5v2"/><path d="M1 24v-2a5 5 0 0 1 5-5h.8"/></g></svg>
<span id="a8" class="t" style="left:1031.50px;top:1024px;font-size:25px;color:#1e1f21;letter-spacing:0.500px;">Marketing</span>
<svg class="a" style="left:1216px;top:1024px;" width="48" height="48" viewBox="0 0 48 48"><use href="#terry"/></svg>
<span id="o8" class="t" style="left:1273.00px;top:1024px;font-size:25px;color:#1e1f21;letter-spacing:0.167px;">Terry Trainer</span>
<div class="a" style="left:1456px;top:1028px;width:146px;height:40px;background:#f8df72;border-radius:8px;"></div>
<span id="s8" class="t" style="left:1463.00px;top:1024px;font-size:25px;color:#1e1f21;letter-spacing:0.800px;">Not started</span>
<div class="a" style="left:1696px;top:1047.6px;width:24px;height:2.1px;background:#6d6e6f;"></div>
<div class="a" style="left:0px;top:1155px;width:2400px;height:2px;background:#edeae9;"></div>
<div class="a" style="left:68px;top:1108px;width:24px;height:24px;box-sizing:border-box;border:2px solid #6d6e6f;border-radius:5px;background:#fff;"></div>
<svg class="a" style="left:170px;top:1115.8px;" width="20" height="11" viewBox="0 0 20 11"><path d="M1.5 1.2H18.5L10 9.8z" fill="#6d6e6f" stroke="#6d6e6f" stroke-width="2" stroke-linejoin="round"/></svg>
<span id="n9" class="t" style="left:215.50px;top:1096px;font-size:29px;color:#1e1f21;letter-spacing:0.215px;">Increase brand recognition with target<span class="e">...</span></span>
<span id="c9_0" class="t" style="left:824.50px;top:1096px;font-size:25px;color:#6d6e6f;">1</span>
<svg class="a" style="left:845.7px;top:1107.6px;" width="24" height="23" viewBox="0 0 24 23"><g fill="none" stroke="#6d6e6f" stroke-width="1.9" stroke-linejoin="round" stroke-linecap="round"><path d="M8 21.2H3.2a2 2 0 0 1-2-2V11.4a2 2 0 0 1 2-2H8z" /><path d="M8 10L11.2 2.9c.4-1 1-1.7 1.9-1.7c1.3 0 1.9 1 1.9 2.4V9.4h5.600000000000001a2.2 2.2 0 0 1 2.2 2.6l-1.2 7.3a2.3 2.3 0 0 1-2.3 1.9H8" /></g></svg>
<span id="c9_2" class="t" style="left:886.50px;top:1096px;font-size:25px;color:#6d6e6f;">3</span>
<svg class="a" style="left:909.8px;top:1108.1px;" width="24" height="22" viewBox="0 0 24 22"><g fill="none" stroke="#6d6e6f" stroke-width="1.9" stroke-linejoin="round"><path d="M10.4 3.1a1.9 1.9 0 0 1 3.2 0L22.5 18.1a1.9 1.9 0 0 1-1.6 2.9H3.1a1.9 1.9 0 0 1-1.6-2.9z"/></g></svg>
<svg class="a" style="left:988px;top:1108px;" width="24" height="24" viewBox="0 0 24 24"><g fill="none" stroke="#6d6e6f" stroke-width="2"><circle cx="16" cy="7" r="6"/><path d="M8.4 1A6 6 0 0 0 8.4 13"/><path d="M9 24v-2a5 5 0 0 1 5-5h4a5 5 0 0 1 5 5v2"/><path d="M1 24v-2a5 5 0 0 1 5-5h.8"/></g></svg>
<span id="a9" class="t" style="left:1031.50px;top:1096px;font-size:25px;color:#1e1f21;letter-spacing:0.500px;">Marketing</span>
<svg class="a" style="left:1216px;top:1096px;" width="48" height="48" viewBox="0 0 48 48"><use href="#terry"/></svg>
<span id="o9" class="t" style="left:1273.00px;top:1096px;font-size:25px;color:#1e1f21;letter-spacing:0.167px;">Terry Trainer</span>
<div class="a" style="left:1456px;top:1119.6px;width:24px;height:2.1px;background:#6d6e6f;"></div>
<div class="a" style="left:1696px;top:1100px;width:132px;height:40px;background:#83d8a5;border-radius:8px;"></div>
<span id="p9" class="t" style="left:1705.00px;top:1096px;font-size:25px;color:#1e1f21;letter-spacing:-0.125px;">Alex Good</span>
<span id="d9" class="t" style="left:1935.00px;top:1096px;font-size:25px;color:#6d6e6f;letter-spacing:-0.500px;">Nov 11</span>
<div class="a" style="left:0px;top:1227px;width:2400px;height:2px;background:#edeae9;"></div>
<div class="a" style="left:68px;top:1180px;width:24px;height:24px;box-sizing:border-box;border:2px solid #6d6e6f;border-radius:5px;background:#fff;"></div>
<svg class="a" style="left:224px;top:1182px;" width="11" height="20" viewBox="0 0 11 20"><path d="M1.2 1.5V18.5L9.8 10z" fill="#6d6e6f" stroke="#6d6e6f" stroke-width="2" stroke-linejoin="round"/></svg>
<span id="n10" class="t" style="left:263.50px;top:1168px;font-size:29px;color:#1e1f21;letter-spacing:0.004px;">Increase engagement with social media<span class="e">...</span></span>
<span id="c10_0" class="t" style="left:824.50px;top:1168px;font-size:25px;color:#6d6e6f;">1</span>
<svg class="a" style="left:845.7px;top:1179.6px;" width="24" height="23" viewBox="0 0 24 23"><g fill="none" stroke="#6d6e6f" stroke-width="1.9" stroke-linejoin="round" stroke-linecap="round"><path d="M8 21.2H3.2a2 2 0 0 1-2-2V11.4a2 2 0 0 1 2-2H8z" /><path d="M8 10L11.2 2.9c.4-1 1-1.7 1.9-1.7c1.3 0 1.9 1 1.9 2.4V9.4h5.600000000000001a2.2 2.2 0 0 1 2.2 2.6l-1.2 7.3a2.3 2.3 0 0 1-2.3 1.9H8" /></g></svg>
<span id="c10_2" class="t" style="left:886.50px;top:1168px;font-size:25px;color:#6d6e6f;">3</span>
<svg class="a" style="left:909.8px;top:1180.1px;" width="24" height="22" viewBox="0 0 24 22"><g fill="none" stroke="#6d6e6f" stroke-width="1.9" stroke-linejoin="round"><path d="M10.4 3.1a1.9 1.9 0 0 1 3.2 0L22.5 18.1a1.9 1.9 0 0 1-1.6 2.9H3.1a1.9 1.9 0 0 1-1.6-2.9z"/></g></svg>
<svg class="a" style="left:988px;top:1180px;" width="24" height="24" viewBox="0 0 24 24"><g fill="none" stroke="#6d6e6f" stroke-width="2"><circle cx="16" cy="7" r="6"/><path d="M8.4 1A6 6 0 0 0 8.4 13"/><path d="M9 24v-2a5 5 0 0 1 5-5h4a5 5 0 0 1 5 5v2"/><path d="M1 24v-2a5 5 0 0 1 5-5h.8"/></g></svg>
<span id="a10" class="t" style="left:1031.50px;top:1168px;font-size:25px;color:#1e1f21;letter-spacing:-0.046px;">Social Media</span>
<div class="a" style="left:1216px;top:1168px;width:48px;height:48px;background:#8d84e8;border-radius:50%;box-shadow:inset 0 0 0 1.5px rgba(0,0,0,.05);"></div>
<span id="j10" class="t" style="left:1216.00px;top:1168.2px;font-size:23.7px;color:#fff;width:48px;text-align:center;transform:scaleX(0.910);">EL</span>
<span id="o10" class="t" style="left:1271.00px;top:1168px;font-size:25px;color:#1e1f21;letter-spacing:-0.143px;">Emma Lin</span>
<div class="a" style="left:1696px;top:1191.6px;width:24px;height:2.1px;background:#6d6e6f;"></div>
<div class="a" style="left:0px;top:1299px;width:2400px;height:2px;background:#edeae9;"></div>
<div class="a" style="left:68px;top:1252px;width:24px;height:24px;box-sizing:border-box;border:2px solid #6d6e6f;border-radius:5px;background:#fff;"></div>
<svg class="a" style="left:224px;top:1254px;" width="11" height="20" viewBox="0 0 11 20"><path d="M1.2 1.5V18.5L9.8 10z" fill="#6d6e6f" stroke="#6d6e6f" stroke-width="2" stroke-linejoin="round"/></svg>
<span id="n11" class="t" style="left:263.50px;top:1240px;font-size:29px;color:#1e1f21;letter-spacing:0.042px;">Double impressions from paid ad spend</span>
<span id="c11_0" class="t" style="left:790.50px;top:1240px;font-size:25px;color:#6d6e6f;">1</span>
<svg class="a" style="left:811.8px;top:1251.6px;" width="24" height="23" viewBox="0 0 24 23"><g fill="none" stroke="#6d6e6f" stroke-width="1.9" stroke-linejoin="round" stroke-linecap="round"><path d="M8 21.2H3.2a2 2 0 0 1-2-2V11.4a2 2 0 0 1 2-2H8z" /><path d="M8 10L11.2 2.9c.4-1 1-1.7 1.9-1.7c1.3 0 1.9 1 1.9 2.4V9.4h5.600000000000001a2.2 2.2 0 0 1 2.2 2.6l-1.2 7.3a2.3 2.3 0 0 1-2.3 1.9H8" /></g></svg>
<span id="c11_2" class="t" style="left:852.10px;top:1240px;font-size:25px;color:#6d6e6f;">3</span>
<svg class="a" style="left:876px;top:1252.1px;" width="24" height="22" viewBox="0 0 24 22"><g fill="none" stroke="#6d6e6f" stroke-width="1.9" stroke-linejoin="round"><path d="M10.4 3.1a1.9 1.9 0 0 1 3.2 0L22.5 18.1a1.9 1.9 0 0 1-1.6 2.9H3.1a1.9 1.9 0 0 1-1.6-2.9z"/></g></svg>
<svg class="a" style="left:988px;top:1252px;" width="24" height="24" viewBox="0 0 24 24"><g fill="none" stroke="#6d6e6f" stroke-width="2"><circle cx="16" cy="7" r="6"/><path d="M8.4 1A6 6 0 0 0 8.4 13"/><path d="M9 24v-2a5 5 0 0 1 5-5h4a5 5 0 0 1 5 5v2"/><path d="M1 24v-2a5 5 0 0 1 5-5h.8"/></g></svg>
<span id="a11" class="t" style="left:1031.50px;top:1240px;font-size:25px;color:#1e1f21;letter-spacing:-0.072px;">Paid Ads</span>
<div class="a" style="left:1216px;top:1240px;width:48px;height:48px;background:#f1bd6c;border-radius:50%;box-shadow:inset 0 0 0 1.5px rgba(0,0,0,.05);"></div>
<span id="j11" class="t" style="left:1216.00px;top:1240.2px;font-size:23.7px;color:#1e1f21;width:48px;text-align:center;transform:scaleX(0.933);">PS</span>
<span id="o11" class="t" style="left:1271.00px;top:1240px;font-size:25px;color:#1e1f21;letter-spacing:-0.200px;">Pawan Singh</span>
<div class="a" style="left:1696px;top:1263.6px;width:24px;height:2.1px;background:#6d6e6f;"></div>
<div class="a" style="left:0px;top:1371px;width:2400px;height:2px;background:#edeae9;"></div>
<div class="a" style="left:68px;top:1324px;width:24px;height:24px;box-sizing:border-box;border:2px solid #6d6e6f;border-radius:5px;background:#fff;"></div>
<svg class="a" style="left:224px;top:1326px;" width="11" height="20" viewBox="0 0 11 20"><path d="M1.2 1.5V18.5L9.8 10z" fill="#6d6e6f" stroke="#6d6e6f" stroke-width="2" stroke-linejoin="round"/></svg>
<span id="n12" class="t" style="left:263.50px;top:1312px;font-size:29px;color:#1e1f21;letter-spacing:0.134px;">Increase proportion of business<span class="e">...</span></span>
<span id="c12_0" class="t" style="left:824.50px;top:1312px;font-size:25px;color:#6d6e6f;">1</span>
<svg class="a" style="left:845.7px;top:1323.6px;" width="24" height="23" viewBox="0 0 24 23"><g fill="none" stroke="#6d6e6f" stroke-width="1.9" stroke-linejoin="round" stroke-linecap="round"><path d="M8 21.2H3.2a2 2 0 0 1-2-2V11.4a2 2 0 0 1 2-2H8z" /><path d="M8 10L11.2 2.9c.4-1 1-1.7 1.9-1.7c1.3 0 1.9 1 1.9 2.4V9.4h5.600000000000001a2.2 2.2 0 0 1 2.2 2.6l-1.2 7.3a2.3 2.3 0 0 1-2.3 1.9H8" /></g></svg>
<span id="c12_2" class="t" style="left:886.50px;top:1312px;font-size:25px;color:#6d6e6f;">3</span>
<svg class="a" style="left:909.8px;top:1324.1px;" width="24" height="22" viewBox="0 0 24 22"><g fill="none" stroke="#6d6e6f" stroke-width="1.9" stroke-linejoin="round"><path d="M10.4 3.1a1.9 1.9 0 0 1 3.2 0L22.5 18.1a1.9 1.9 0 0 1-1.6 2.9H3.1a1.9 1.9 0 0 1-1.6-2.9z"/></g></svg>
<svg class="a" style="left:988px;top:1324px;" width="24" height="24" viewBox="0 0 24 24"><g fill="none" stroke="#6d6e6f" stroke-width="2"><circle cx="16" cy="7" r="6"/><path d="M8.4 1A6 6 0 0 0 8.4 13"/><path d="M9 24v-2a5 5 0 0 1 5-5h4a5 5 0 0 1 5 5v2"/><path d="M1 24v-2a5 5 0 0 1 5-5h.8"/></g></svg>
<span id="a12" class="t" style="left:1031.50px;top:1312px;font-size:25px;color:#1e1f21;letter-spacing:0.500px;">Marketing</span>
<svg class="a" style="left:1216px;top:1312px;" width="48" height="48" viewBox="0 0 48 48"><use href="#terry"/></svg>
<span id="o12" class="t" style="left:1273.00px;top:1312px;font-size:25px;color:#1e1f21;letter-spacing:0.167px;">Terry Trainer</span>
<div class="a" style="left:1456px;top:1316px;width:102px;height:40px;background:#ece9e8;border-radius:8px;"></div>
<span id="s12" class="t" style="left:1463.00px;top:1312px;font-size:25px;color:#1e1f21;letter-spacing:0.667px;">Drafted</span>
<div class="a" style="left:1696px;top:1335.6px;width:24px;height:2.1px;background:#6d6e6f;"></div>
<div class="a" style="left:0px;top:1443px;width:2400px;height:2px;background:#edeae9;"></div>
<div class="a" style="left:68px;top:1396px;width:24px;height:24px;box-sizing:border-box;border:2px solid #cfcbcb;border-radius:5px;background:#f9f8f8;"></div>
<svg class="a" style="left:122px;top:1403.8px;" width="20" height="11" viewBox="0 0 20 11"><path d="M1.5 1.2H18.5L10 9.8z" fill="#6d6e6f" stroke="#6d6e6f" stroke-width="2" stroke-linejoin="round"/></svg>
<span id="n13" class="t" style="left:167.50px;top:1384px;font-size:29px;color:#1e1f21;letter-spacing:-0.021px;">Our employee workforce is engaged and<span class="e">...</span></span>
<span id="c13_0" class="t" style="left:792.30px;top:1384px;font-size:25px;color:#6d6e6f;letter-spacing:1.200px;">204</span>
<svg class="a" style="left:845.7px;top:1395.6px;" width="24" height="23" viewBox="0 0 24 23"><g fill="none" stroke="#6d6e6f" stroke-width="1.9" stroke-linejoin="round" stroke-linecap="round"><path d="M8 21.2H3.2a2 2 0 0 1-2-2V11.4a2 2 0 0 1 2-2H8z" /><path d="M8 10L11.2 2.9c.4-1 1-1.7 1.9-1.7c1.3 0 1.9 1 1.9 2.4V9.4h5.600000000000001a2.2 2.2 0 0 1 2.2 2.6l-1.2 7.3a2.3 2.3 0 0 1-2.3 1.9H8" /></g></svg>
<span id="c13_2" class="t" style="left:886.50px;top:1384px;font-size:25px;color:#6d6e6f;">4</span>
<svg class="a" style="left:909.8px;top:1396.1px;" width="24" height="22" viewBox="0 0 24 22"><g fill="none" stroke="#6d6e6f" stroke-width="1.9" stroke-linejoin="round"><path d="M10.4 3.1a1.9 1.9 0 0 1 3.2 0L22.5 18.1a1.9 1.9 0 0 1-1.6 2.9H3.1a1.9 1.9 0 0 1-1.6-2.9z"/></g></svg>
<svg class="a" style="left:988px;top:1396px;" width="24" height="24" viewBox="0 0 24 24"><g fill="none" stroke="#6d6e6f" stroke-width="2"><circle cx="16" cy="7" r="6"/><path d="M8.4 1A6 6 0 0 0 8.4 13"/><path d="M9 24v-2a5 5 0 0 1 5-5h4a5 5 0 0 1 5 5v2"/><path d="M1 24v-2a5 5 0 0 1 5-5h.8"/></g></svg>
<span id="a13" class="t" style="left:1031.50px;top:1384px;font-size:25px;color:#1e1f21;letter-spacing:-0.001px;">People Ops</span>
<div class="a" style="left:1216px;top:1384px;width:48px;height:48px;background:#4573d2;border-radius:50%;box-shadow:inset 0 0 0 1.5px rgba(0,0,0,.05);"></div>
<span id="j13" class="t" style="left:1216.00px;top:1384.2px;font-size:23.7px;color:#fff;width:48px;text-align:center;transform:scaleX(0.963);">AF</span>
<span id="o13" class="t" style="left:1273.00px;top:1384px;font-size:25px;color:#1e1f21;letter-spacing:-0.200px;">Anna Folder</span>
<div class="a" style="left:1456px;top:1407.6px;width:24px;height:2.1px;background:#6d6e6f;"></div>
<div class="a" style="left:1696px;top:1407.6px;width:24px;height:2.1px;background:#6d6e6f;"></div>
<span id="d13" class="t" style="left:1937.00px;top:1384px;font-size:25px;color:#6d6e6f;letter-spacing:-0.250px;">Aug 5</span>
<div class="a" style="left:0px;top:1515px;width:2400px;height:2px;background:#edeae9;"></div>
<div class="a" style="left:68px;top:1468px;width:24px;height:24px;box-sizing:border-box;border:2px solid #cfcbcb;border-radius:5px;background:#f9f8f8;"></div>
<svg class="a" style="left:176px;top:1470px;" width="11" height="20" viewBox="0 0 11 20"><path d="M1.2 1.5V18.5L9.8 10z" fill="#6d6e6f" stroke="#6d6e6f" stroke-width="2" stroke-linejoin="round"/></svg>
<span id="n14" class="t" style="left:215.50px;top:1456px;font-size:29px;color:#1e1f21;letter-spacing:-0.213px;">Increase Pulse survey scores +10pts in H1<span class="e">...</span></span>
<span id="c14_0" class="t" style="left:824.50px;top:1456px;font-size:25px;color:#6d6e6f;">1</span>
<svg class="a" style="left:845.7px;top:1467.6px;" width="24" height="23" viewBox="0 0 24 23"><g fill="none" stroke="#6d6e6f" stroke-width="1.9" stroke-linejoin="round" stroke-linecap="round"><path d="M8 21.2H3.2a2 2 0 0 1-2-2V11.4a2 2 0 0 1 2-2H8z" /><path d="M8 10L11.2 2.9c.4-1 1-1.7 1.9-1.7c1.3 0 1.9 1 1.9 2.4V9.4h5.600000000000001a2.2 2.2 0 0 1 2.2 2.6l-1.2 7.3a2.3 2.3 0 0 1-2.3 1.9H8" /></g></svg>
<span id="c14_2" class="t" style="left:886.50px;top:1456px;font-size:25px;color:#6d6e6f;">3</span>
<svg class="a" style="left:909.8px;top:1468.1px;" width="24" height="22" viewBox="0 0 24 22"><g fill="none" stroke="#6d6e6f" stroke-width="1.9" stroke-linejoin="round"><path d="M10.4 3.1a1.9 1.9 0 0 1 3.2 0L22.5 18.1a1.9 1.9 0 0 1-1.6 2.9H3.1a1.9 1.9 0 0 1-1.6-2.9z"/></g></svg>
<svg class="a" style="left:988px;top:1468px;" width="24" height="24" viewBox="0 0 24 24"><g fill="none" stroke="#6d6e6f" stroke-width="2"><circle cx="16" cy="7" r="6"/><path d="M8.4 1A6 6 0 0 0 8.4 13"/><path d="M9 24v-2a5 5 0 0 1 5-5h4a5 5 0 0 1 5 5v2"/><path d="M1 24v-2a5 5 0 0 1 5-5h.8"/></g></svg>
<span id="a14" class="t" style="left:1031.50px;top:1456px;font-size:25px;color:#1e1f21;letter-spacing:-0.001px;">People Ops</span>
<div class="a" style="left:1216px;top:1456px;width:48px;height:48px;background:#4573d2;border-radius:50%;box-shadow:inset 0 0 0 1.5px rgba(0,0,0,.05);"></div>
<span id="j14" class="t" style="left:1216.00px;top:1456.2px;font-size:23.7px;color:#fff;width:48px;text-align:center;transform:scaleX(0.963);">AF</span>
<span id="o14" class="t" style="left:1273.00px;top:1456px;font-size:25px;color:#1e1f21;letter-spacing:-0.200px;">Anna Folder</span>
<div class="a" style="left:1456px;top:1479.6px;width:24px;height:2.1px;background:#6d6e6f;"></div>
<div class="a" style="left:1696px;top:1479.6px;width:24px;height:2.1px;background:#6d6e6f;"></div>
<span id="d14" class="t" style="left:1936.00px;top:1456px;font-size:25px;color:#6d6e6f;letter-spacing:0.700px;">Oct 26</span>
<div class="a" style="left:0px;top:1587px;width:2400px;height:2px;background:#edeae9;"></div>
<div class="a" style="left:68px;top:1540px;width:24px;height:24px;box-sizing:border-box;border:2px solid #cfcbcb;border-radius:5px;background:#f9f8f8;"></div>
<svg class="a" style="left:176px;top:1542px;" width="11" height="20" viewBox="0 0 11 20"><path d="M1.2 1.5V18.5L9.8 10z" fill="#6d6e6f" stroke="#6d6e6f" stroke-width="2" stroke-linejoin="round"/></svg>
<span id="n15" class="t" style="left:215.50px;top:1528px;font-size:29px;color:#1e1f21;letter-spacing:0.034px;">Employee churn/attrition is down 5%<span class="e">...</span></span>
<span id="c15_0" class="t" style="left:824.50px;top:1528px;font-size:25px;color:#6d6e6f;">1</span>
<svg class="a" style="left:845.7px;top:1539.6px;" width="24" height="23" viewBox="0 0 24 23"><g fill="none" stroke="#6d6e6f" stroke-width="1.9" stroke-linejoin="round" stroke-linecap="round"><path d="M8 21.2H3.2a2 2 0 0 1-2-2V11.4a2 2 0 0 1 2-2H8z" /><path d="M8 10L11.2 2.9c.4-1 1-1.7 1.9-1.7c1.3 0 1.9 1 1.9 2.4V9.4h5.600000000000001a2.2 2.2 0 0 1 2.2 2.6l-1.2 7.3a2.3 2.3 0 0 1-2.3 1.9H8" /></g></svg>
<span id="c15_2" class="t" style="left:886.50px;top:1528px;font-size:25px;color:#6d6e6f;">2</span>
<svg class="a" style="left:909.8px;top:1540.1px;" width="24" height="22" viewBox="0 0 24 22"><g fill="none" stroke="#6d6e6f" stroke-width="1.9" stroke-linejoin="round"><path d="M10.4 3.1a1.9 1.9 0 0 1 3.2 0L22.5 18.1a1.9 1.9 0 0 1-1.6 2.9H3.1a1.9 1.9 0 0 1-1.6-2.9z"/></g></svg>
<svg class="a" style="left:988px;top:1540px;" width="24" height="24" viewBox="0 0 24 24"><g fill="none" stroke="#6d6e6f" stroke-width="2"><circle cx="16" cy="7" r="6"/><path d="M8.4 1A6 6 0 0 0 8.4 13"/><path d="M9 24v-2a5 5 0 0 1 5-5h4a5 5 0 0 1 5 5v2"/><path d="M1 24v-2a5 5 0 0 1 5-5h.8"/></g></svg>
<span id="a15" class="t" style="left:1031.50px;top:1528px;font-size:25px;color:#1e1f21;letter-spacing:-0.001px;">People Ops</span>
<div class="a" style="left:1216px;top:1528px;width:48px;height:48px;background:#4573d2;border-radius:50%;box-shadow:inset 0 0 0 1.5px rgba(0,0,0,.05);"></div>
<span id="j15" class="t" style="left:1216.00px;top:1528.2px;font-size:23.7px;color:#fff;width:48px;text-align:center;transform:scaleX(0.963);">AF</span>
<span id="o15" class="t" style="left:1273.00px;top:1528px;font-size:25px;color:#1e1f21;letter-spacing:-0.200px;">Anna Folder</span>
<div class="a" style="left:1456px;top:1551.6px;width:24px;height:2.1px;background:#6d6e6f;"></div>
<div class="a" style="left:1696px;top:1551.6px;width:24px;height:2.1px;background:#6d6e6f;"></div>
<div class="a" style="left:0px;top:1659px;width:2400px;height:2px;background:#edeae9;"></div>
<div class="a" style="left:68px;top:1612px;width:24px;height:24px;box-sizing:border-box;border:2px solid #cfcbcb;border-radius:5px;background:#f9f8f8;"></div>
<svg class="a" style="left:176px;top:1614px;" width="11" height="20" viewBox="0 0 11 20"><path d="M1.2 1.5V18.5L9.8 10z" fill="#6d6e6f" stroke="#6d6e6f" stroke-width="2" stroke-linejoin="round"/></svg>
<span id="n16" class="t" style="left:215.50px;top:1600px;font-size:29px;color:#1e1f21;letter-spacing:0.031px;">Employee education &amp; upskilling program<span class="e">...</span></span>
<span id="c16_0" class="t" style="left:824.50px;top:1600px;font-size:25px;color:#6d6e6f;">1</span>
<svg class="a" style="left:845.7px;top:1611.6px;" width="24" height="23" viewBox="0 0 24 23"><g fill="none" stroke="#6d6e6f" stroke-width="1.9" stroke-linejoin="round" stroke-linecap="round"><path d="M8 21.2H3.2a2 2 0 0 1-2-2V11.4a2 2 0 0 1 2-2H8z" /><path d="M8 10L11.2 2.9c.4-1 1-1.7 1.9-1.7c1.3 0 1.9 1 1.9 2.4V9.4h5.600000000000001a2.2 2.2 0 0 1 2.2 2.6l-1.2 7.3a2.3 2.3 0 0 1-2.3 1.9H8" /></g></svg>
<span id="c16_2" class="t" style="left:886.50px;top:1600px;font-size:25px;color:#6d6e6f;">3</span>
<svg class="a" style="left:909.8px;top:1612.1px;" width="24" height="22" viewBox="0 0 24 22"><g fill="none" stroke="#6d6e6f" stroke-width="1.9" stroke-linejoin="round"><path d="M10.4 3.1a1.9 1.9 0 0 1 3.2 0L22.5 18.1a1.9 1.9 0 0 1-1.6 2.9H3.1a1.9 1.9 0 0 1-1.6-2.9z"/></g></svg>
<svg class="a" style="left:988px;top:1612px;" width="24" height="24" viewBox="0 0 24 24"><g fill="none" stroke="#6d6e6f" stroke-width="2"><circle cx="16" cy="7" r="6"/><path d="M8.4 1A6 6 0 0 0 8.4 13"/><path d="M9 24v-2a5 5 0 0 1 5-5h4a5 5 0 0 1 5 5v2"/><path d="M1 24v-2a5 5 0 0 1 5-5h.8"/></g></svg>
<span id="a16" class="t" style="left:1031.50px;top:1600px;font-size:25px;color:#1e1f21;letter-spacing:-0.001px;">People Ops</span>
<div class="a" style="left:1216px;top:1600px;width:48px;height:48px;background:#4573d2;border-radius:50%;box-shadow:inset 0 0 0 1.5px rgba(0,0,0,.05);"></div>
<span id="j16" class="t" style="left:1216.00px;top:1600.2px;font-size:23.7px;color:#fff;width:48px;text-align:center;transform:scaleX(0.963);">AF</span>
<span id="o16" class="t" style="left:1273.00px;top:1600px;font-size:25px;color:#1e1f21;letter-spacing:-0.200px;">Anna Folder</span>
<div class="a" style="left:1456px;top:1604px;width:146px;height:40px;background:#f8df72;border-radius:8px;"></div>
<span id="s16" class="t" style="left:1463.00px;top:1600px;font-size:25px;color:#1e1f21;letter-spacing:0.800px;">Not started</span>
<div class="a" style="left:1696px;top:1623.6px;width:24px;height:2.1px;background:#6d6e6f;"></div>
<span id="d16" class="t" style="left:1936.00px;top:1600px;font-size:25px;color:#6d6e6f;letter-spacing:-0.500px;">Sep 14</span>
<div class="a" style="left:0px;top:1731px;width:2400px;height:2px;background:#edeae9;"></div>
<div class="a" style="left:68px;top:1684px;width:24px;height:24px;box-sizing:border-box;border:2px solid #cfcbcb;border-radius:5px;background:#f9f8f8;"></div>
<svg class="a" style="left:170px;top:1691.8px;" width="20" height="11" viewBox="0 0 20 11"><path d="M1.5 1.2H18.5L10 9.8z" fill="#6d6e6f" stroke="#6d6e6f" stroke-width="2" stroke-linejoin="round"/></svg>
<span id="n17" class="t" style="left:215.50px;top:1672px;font-size:29px;color:#1e1f21;letter-spacing:0.177px;">Contract is closed with program developme<span class="e">...</span></span>
<span id="c17_0" class="t" style="left:824.50px;top:1672px;font-size:25px;color:#6d6e6f;">1</span>
<svg class="a" style="left:845.7px;top:1683.6px;" width="24" height="23" viewBox="0 0 24 23"><g fill="none" stroke="#6d6e6f" stroke-width="1.9" stroke-linejoin="round" stroke-linecap="round"><path d="M8 21.2H3.2a2 2 0 0 1-2-2V11.4a2 2 0 0 1 2-2H8z" /><path d="M8 10L11.2 2.9c.4-1 1-1.7 1.9-1.7c1.3 0 1.9 1 1.9 2.4V9.4h5.600000000000001a2.2 2.2 0 0 1 2.2 2.6l-1.2 7.3a2.3 2.3 0 0 1-2.3 1.9H8" /></g></svg>
<span id="c17_2" class="t" style="left:885.50px;top:1672px;font-size:25px;color:#6d6e6f;">1</span>
<svg class="a" style="left:905.8px;top:1684.1px;" width="24" height="22" viewBox="0 0 24 22"><g fill="none" stroke="#6d6e6f" stroke-width="1.9" stroke-linejoin="round"><path d="M10.4 3.1a1.9 1.9 0 0 1 3.2 0L22.5 18.1a1.9 1.9 0 0 1-1.6 2.9H3.1a1.9 1.9 0 0 1-1.6-2.9z"/></g></svg>
<svg class="a" style="left:988px;top:1684px;" width="24" height="24" viewBox="0 0 24 24"><g fill="none" stroke="#6d6e6f" stroke-width="2"><circle cx="16" cy="7" r="6"/><path d="M8.4 1A6 6 0 0 0 8.4 13"/><path d="M9 24v-2a5 5 0 0 1 5-5h4a5 5 0 0 1 5 5v2"/><path d="M1 24v-2a5 5 0 0 1 5-5h.8"/></g></svg>
<span id="a17" class="t" style="left:1031.50px;top:1672px;font-size:25px;color:#1e1f21;letter-spacing:0.333px;">Operations</span>
<div class="a" style="left:1216px;top:1672px;width:48px;height:48px;background:#4ecbc4;border-radius:50%;box-shadow:inset 0 0 0 1.5px rgba(0,0,0,.05);"></div>
<span id="j17" class="t" style="left:1216.00px;top:1672.2px;font-size:23.7px;color:#1e1f21;width:48px;text-align:center;transform:scaleX(1.017);">TB</span>
<span id="o17" class="t" style="left:1273.00px;top:1672px;font-size:25px;color:#1e1f21;letter-spacing:0.050px;">Taylor Bode</span>
<div class="a" style="left:1456px;top:1676px;width:102px;height:40px;background:#ece9e8;border-radius:8px;"></div>
<span id="s17" class="t" style="left:1463.00px;top:1672px;font-size:25px;color:#1e1f21;letter-spacing:0.667px;">Drafted</span>
<div class="a" style="left:1696px;top:1695.6px;width:24px;height:2.1px;background:#6d6e6f;"></div>
<div class="a" style="left:0px;top:1803px;width:2400px;height:2px;background:#edeae9;"></div>
<div class="a" style="left:68px;top:1756px;width:24px;height:24px;box-sizing:border-box;border:2px solid #6d6e6f;border-radius:5px;background:#fff;"></div>
<svg class="a" style="left:224px;top:1758px;" width="11" height="20" viewBox="0 0 11 20"><path d="M1.2 1.5V18.5L9.8 10z" fill="#6d6e6f" stroke="#6d6e6f" stroke-width="2" stroke-linejoin="round"/></svg>
<span id="n18" class="t" style="left:263.50px;top:1744px;font-size:29px;color:#1e1f21;letter-spacing:0.153px;">Content for program development is<span class="e">...</span></span>
<span id="c18_0" class="t" style="left:824.50px;top:1744px;font-size:25px;color:#6d6e6f;">1</span>
<svg class="a" style="left:845.7px;top:1755.6px;" width="24" height="23" viewBox="0 0 24 23"><g fill="none" stroke="#6d6e6f" stroke-width="1.9" stroke-linejoin="round" stroke-linecap="round"><path d="M8 21.2H3.2a2 2 0 0 1-2-2V11.4a2 2 0 0 1 2-2H8z" /><path d="M8 10L11.2 2.9c.4-1 1-1.7 1.9-1.7c1.3 0 1.9 1 1.9 2.4V9.4h5.600000000000001a2.2 2.2 0 0 1 2.2 2.6l-1.2 7.3a2.3 2.3 0 0 1-2.3 1.9H8" /></g></svg>
<span id="c18_2" class="t" style="left:886.50px;top:1744px;font-size:25px;color:#6d6e6f;">2</span>
<svg class="a" style="left:909.8px;top:1756.1px;" width="24" height="22" viewBox="0 0 24 22"><g fill="none" stroke="#6d6e6f" stroke-width="1.9" stroke-linejoin="round"><path d="M10.4 3.1a1.9 1.9 0 0 1 3.2 0L22.5 18.1a1.9 1.9 0 0 1-1.6 2.9H3.1a1.9 1.9 0 0 1-1.6-2.9z"/></g></svg>
<svg class="a" style="left:988px;top:1756px;" width="24" height="24" viewBox="0 0 24 24"><g fill="none" stroke="#6d6e6f" stroke-width="2"><circle cx="16" cy="7" r="6"/><path d="M8.4 1A6 6 0 0 0 8.4 13"/><path d="M9 24v-2a5 5 0 0 1 5-5h4a5 5 0 0 1 5 5v2"/><path d="M1 24v-2a5 5 0 0 1 5-5h.8"/></g></svg>
<span id="a18" class="t" style="left:1031.50px;top:1744px;font-size:25px;color:#1e1f21;letter-spacing:0.333px;">Operations</span>
<div class="a" style="left:1216px;top:1744px;width:48px;height:48px;background:#4ecbc4;border-radius:50%;box-shadow:inset 0 0 0 1.5px rgba(0,0,0,.05);"></div>
<span id="j18" class="t" style="left:1216.00px;top:1744.2px;font-size:23.7px;color:#1e1f21;width:48px;text-align:center;transform:scaleX(1.017);">TB</span>
<span id="o18" class="t" style="left:1273.00px;top:1744px;font-size:25px;color:#1e1f21;letter-spacing:0.050px;">Taylor Bode</span>
<div class="a" style="left:1456px;top:1767.6px;width:24px;height:2.1px;background:#6d6e6f;"></div>
<div class="a" style="left:1696px;top:1767.6px;width:24px;height:2.1px;background:#6d6e6f;"></div>
<div class="a" style="left:958px;top:437px;width:2px;height:1365px;background:#edeae9;"></div>
<div class="a" style="left:1199px;top:437px;width:2px;height:1365px;background:#edeae9;"></div>
<div class="a" style="left:1439px;top:437px;width:2px;height:1365px;background:#edeae9;"></div>
<div class="a" style="left:1679px;top:437px;width:2px;height:1365px;background:#edeae9;"></div>
<div class="a" style="left:1919px;top:437px;width:2px;height:1365px;background:#edeae9;"></div>
<div class="a" style="left:2159px;top:437px;width:2px;height:1365px;background:#edeae9;"></div>
<div class="a" style="left:2122px;top:279px;width:184px;height:68px;background:#353537;border-radius:9px;box-shadow:0 2px 8px rgba(0,0,0,.18);"></div>
<svg class="a" style="left:2194px;top:346px;" width="40" height="19" viewBox="0 0 40 19"><path d="M0 0H40L22 17.5a2.500000000000001 2.500000000000001 0 0 1-4 0z" fill="#353537"/></svg>
<span id="tip" class="t" style="left:2147.00px;top:289px;font-size:25px;color:#fff;letter-spacing:0.167px;">Add column</span>
<svg class="a" style="left:2215px;top:390px;filter:drop-shadow(0 2px 3px rgba(0,0,0,.25));" width="120" height="120" viewBox="0 0 1659 1659"><g stroke="#000" stroke-width="60" stroke-linejoin="round" stroke-linecap="round"><path fill="#fff" d="M578 885C560 720 500 480 470 330C450 160 620 150 668 290C710 400 730 470 742 515C800 465 930 470 968 580C1020 490 1180 490 1215 625C1260 570 1400 570 1408 700C1415 900 1380 1050 1300 1160C1230 1260 1220 1330 1232 1455L1135 1458C1090 1440 1060 1370 1025 1335C990 1370 960 1440 915 1458L650 1458C655 1400 650 1370 600 1325C520 1250 430 1170 380 1065C330 970 260 900 235 840C200 760 280 690 350 690C440 700 520 800 578 885Z"/><path fill="none" d="M742 515L755 700M968 580L980 705M1215 625L1228 715M820 920V1215M980 920V1215M1145 920V1215"/></g></svg>
</div></div></body></html>
